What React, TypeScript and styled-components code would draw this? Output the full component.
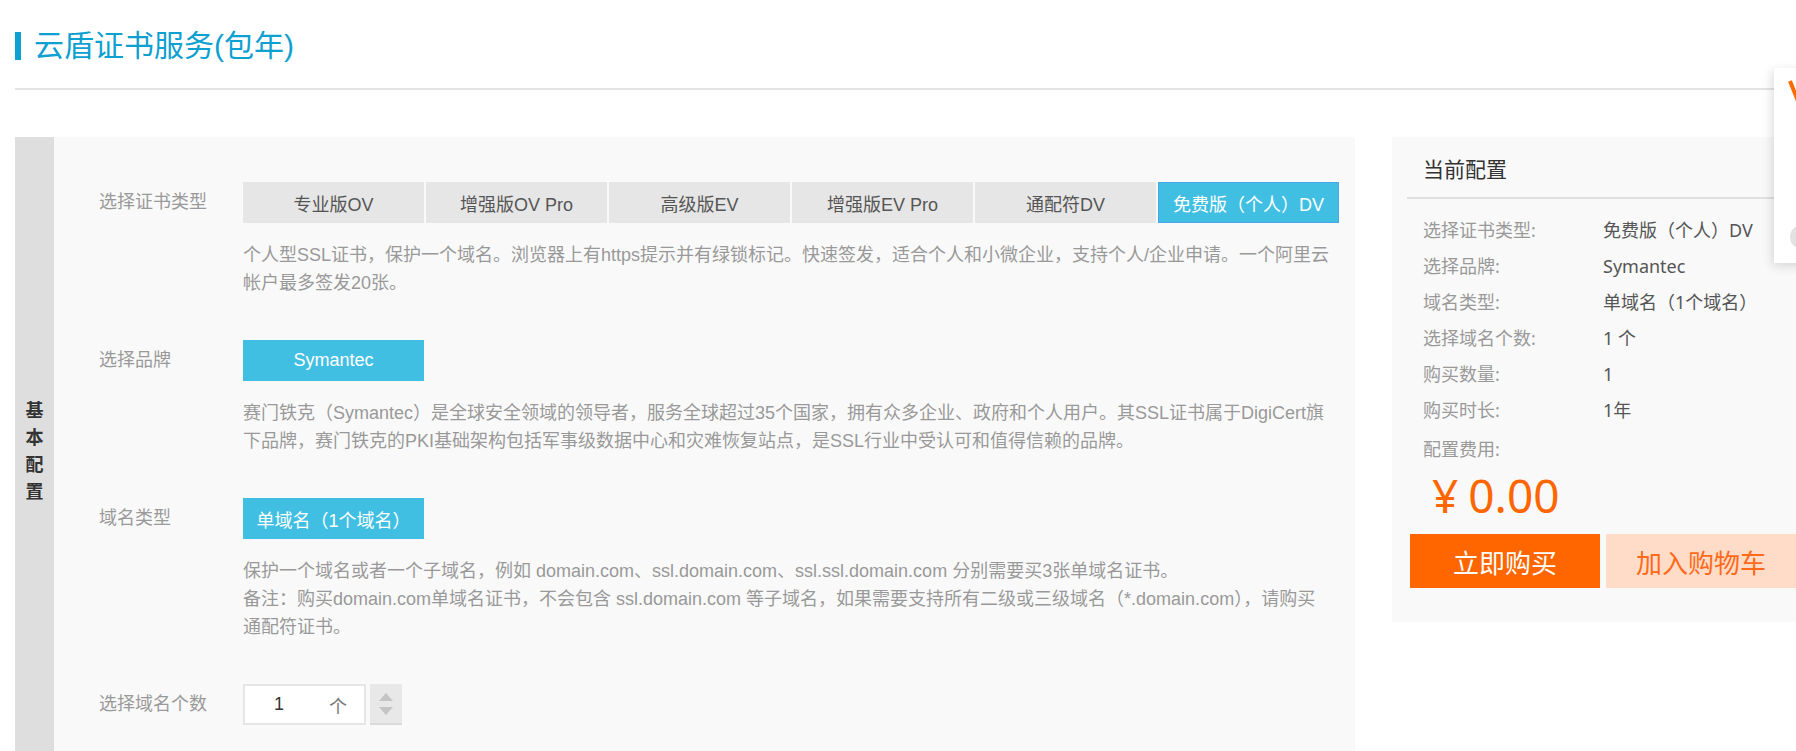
import React from "react";
import styled, { createGlobalStyle } from "styled-components";

const GlobalStyle = createGlobalStyle`
  html, body { margin: 0; padding: 0; background: #fff; overflow: hidden; }
  body { font-family: "Liberation Sans", "Noto Sans CJK SC", sans-serif; }
  * { box-sizing: border-box; }
`;

const Page = styled.div`
  width: 1830px;
  padding-left: 15px;
`;

const Header = styled.header`
  padding: 28px 0 24px;
  border-bottom: 2px solid #e3e3e3;
`;

const TitleRow = styled.div`
  display: flex;
  align-items: center;
  gap: 13px;
`;

const TitleBar = styled.span`
  width: 6px;
  height: 28px;
  background: #0ea0d0;
`;

const Title = styled.h1`
  margin: 0;
  font-size: 30px;
  line-height: 36px;
  font-weight: normal;
  color: #0ea0d0;
`;

const Content = styled.div`
  display: flex;
  align-items: flex-start;
  margin-top: 47px;
`;

const ConfigPanel = styled.section`
  width: 1340px;
  min-height: 626px;
  background: #f9f9f9;
  display: flex;
  flex-shrink: 0;
`;

const Strip = styled.div`
  width: 39px;
  background: #dedede;
  display: flex;
  align-items: center;
  justify-content: center;
`;

const StripText = styled.span`
  width: 18px;
  font-size: 18px;
  line-height: 27px;
  font-weight: bold;
  color: #333;
  text-align: center;
  word-break: break-all;
  font-family: "Noto Sans CJK SC", sans-serif;
`;

const Form = styled.div`
  flex: 1;
  padding: 45px 0 0 45px;
  display: flex;
  flex-direction: column;
  gap: 43px;
`;

const Row = styled.div`
  display: grid;
  grid-template-columns: 144px 1fr;
`;

const Label = styled.div`
  font-size: 18px;
  line-height: 41px;
  color: #999;
`;

const Options = styled.div`
  display: flex;
  gap: 2px;
`;

const Option = styled.div<{ $active?: boolean }>`
  width: 181px;
  height: 41px;
  display: flex;
  align-items: center;
  justify-content: center;
  font-size: 18px;
  border: 1px solid ${(p) => (p.$active ? "#4aa6e8" : "#e6e6e6")};
  background: ${(p) => (p.$active ? "#41bfe3" : "#e6e6e6")};
  color: ${(p) => (p.$active ? "#fff" : "#555")};
`;

const Single = styled(Option)`
  border-color: #41bfe3;
`;

const Desc = styled.div`
  margin-top: 18px;
  font-size: 18px;
  line-height: 28px;
  color: #999;
`;

const DescLine = styled.div`
  white-space: nowrap;
`;

const Counter = styled.div`
  display: flex;
  gap: 4px;
`;

const CountBox = styled.div`
  width: 123px;
  height: 41px;
  border: 2px solid #e6e6e6;
  background: #fff;
  display: flex;
  align-items: center;
  font-size: 18px;
  color: #333;
`;

const CountValue = styled.span`
  width: 84px;
  padding-left: 29px;
`;

const CountUnit = styled.span`
  color: #777;
`;

const Spinner = styled.div`
  width: 32px;
  height: 41px;
  background: #e8e8e8;
  border-bottom: 2px solid #dadada;
  display: flex;
  flex-direction: column;
  align-items: center;
  justify-content: center;
  gap: 6px;
`;

const Arrow = styled.span<{ $down?: boolean }>`
  width: 0;
  height: 0;
  border-left: 7px solid transparent;
  border-right: 7px solid transparent;
  ${(p) =>
    p.$down
      ? "border-top: 8px solid #c4c4c4;"
      : "border-bottom: 8px solid #c4c4c4;"}
`;

const Summary = styled.aside`
  width: 422px;
  margin-left: 37px;
  background: #f9f9f9;
  padding-bottom: 34px;
  flex-shrink: 0;
  font-family: "Noto Sans", "Noto Sans CJK SC", sans-serif;
`;

const SummaryHead = styled.div`
  margin: 0 15px;
  padding: 18px 16px 14px;
  font-size: 21px;
  line-height: 28px;
  color: #333;
  border-bottom: 2px solid #e0e0e0;
`;

const SumList = styled.div`
  margin-top: 13px;
  padding-left: 31px;
`;

const SumRow = styled.div`
  display: grid;
  grid-template-columns: 180px 1fr;
  height: 36px;
  line-height: 36px;
  font-size: 18px;
`;

const SumLabel = styled.span`
  color: #999;
`;

const SumValue = styled.span`
  color: #555;
`;

const FeeLabel = styled.div`
  margin-top: 3px;
  padding-left: 31px;
  font-size: 18px;
  line-height: 36px;
  color: #999;
`;

const Price = styled.div`
  padding-left: 40px;
  font-size: 46px;
  line-height: 56px;
  color: #ff6600;
`;

const Yen = styled.span`
  margin-right: 10px;
`;

const Actions = styled.div`
  display: flex;
  gap: 6px;
  padding: 0 18px;
  margin-top: 11px;
`;

const ActionButton = styled.button<{ $primary?: boolean }>`
  width: 190px;
  height: 54px;
  border: none;
  padding: 0;
  font-size: 26px;
  font-family: "Noto Sans CJK SC", sans-serif;
  background: ${(p) => (p.$primary ? "#ff6600" : "#ffdcc8")};
  color: ${(p) => (p.$primary ? "#fff" : "#ff6a1a")};
`;

const Popup = styled.div`
  position: fixed;
  left: 1774px;
  top: 68px;
  width: 260px;
  height: 195px;
  background: #fff;
  box-shadow: -2px 3px 10px rgba(0, 0, 0, 0.14);
  padding: 11px 0 0 14px;
`;

const PopupDot = styled.div`
  position: absolute;
  left: 16px;
  top: 157px;
  width: 24px;
  height: 24px;
  border-radius: 50%;
  background: #e2e2e2;
`;

const types = [
  "专业版OV",
  "增强版OV Pro",
  "高级版EV",
  "增强版EV Pro",
  "通配符DV",
  "免费版（个人）DV",
];

const summary: [string, string][] = [
  ["选择证书类型:", "免费版（个人）DV"],
  ["选择品牌:", "Symantec"],
  ["域名类型:", "单域名（1个域名）"],
  ["选择域名个数:", "1 个"],
  ["购买数量:", "1"],
  ["购买时长:", "1年"],
];

export default function App() {
  return (
    <>
      <GlobalStyle />
      <Page>
        <Header>
          <TitleRow>
            <TitleBar />
            <Title>云盾证书服务(包年)</Title>
          </TitleRow>
        </Header>
        <Content>
          <ConfigPanel>
            <Strip>
              <StripText>基本配置</StripText>
            </Strip>
            <Form>
              <Row>
                <Label>选择证书类型</Label>
                <div>
                  <Options>
                    {types.map((t, i) => (
                      <Option key={t} $active={i === types.length - 1}>
                        {t}
                      </Option>
                    ))}
                  </Options>
                  <Desc>
                    <DescLine>
                      个人型SSL证书，保护一个域名。浏览器上有https提示并有绿锁标记。快速签发，适合个人和小微企业，支持个人/企业申请。一个阿里云
                    </DescLine>
                    <DescLine>帐户最多签发20张。</DescLine>
                  </Desc>
                </div>
              </Row>
              <Row>
                <Label>选择品牌</Label>
                <div>
                  <Options>
                    <Single $active>Symantec</Single>
                  </Options>
                  <Desc>
                    <DescLine>
                      赛门铁克（Symantec）是全球安全领域的领导者，服务全球超过35个国家，拥有众多企业、政府和个人用户。其SSL证书属于DigiCert旗
                    </DescLine>
                    <DescLine>
                      下品牌，赛门铁克的PKI基础架构包括军事级数据中心和灾难恢复站点，是SSL行业中受认可和值得信赖的品牌。
                    </DescLine>
                  </Desc>
                </div>
              </Row>
              <Row>
                <Label>域名类型</Label>
                <div>
                  <Options>
                    <Single $active>单域名（1个域名）</Single>
                  </Options>
                  <Desc>
                    <DescLine>
                      保护一个域名或者一个子域名，例如 domain.com、ssl.domain.com、ssl.ssl.domain.com 分别需要买3张单域名证书。
                    </DescLine>
                    <DescLine>
                      备注：购买domain.com单域名证书，不会包含 ssl.domain.com 等子域名，如果需要支持所有二级或三级域名（*.domain.com），请购买
                    </DescLine>
                    <DescLine>通配符证书。</DescLine>
                  </Desc>
                </div>
              </Row>
              <Row>
                <Label>选择域名个数</Label>
                <Counter>
                  <CountBox>
                    <CountValue>1</CountValue>
                    <CountUnit>个</CountUnit>
                  </CountBox>
                  <Spinner>
                    <Arrow />
                    <Arrow $down />
                  </Spinner>
                </Counter>
              </Row>
            </Form>
          </ConfigPanel>
          <Summary>
            <SummaryHead>当前配置</SummaryHead>
            <SumList>
              {summary.map(([k, v]) => (
                <SumRow key={k}>
                  <SumLabel>{k}</SumLabel>
                  <SumValue>{v}</SumValue>
                </SumRow>
              ))}
            </SumList>
            <FeeLabel>配置费用:</FeeLabel>
            <Price>
              <Yen>¥</Yen>0.00
            </Price>
            <Actions>
              <ActionButton $primary>立即购买</ActionButton>
              <ActionButton>加入购物车</ActionButton>
            </Actions>
          </Summary>
        </Content>
      </Page>
      <Popup>
        <svg width="40" height="24" viewBox="0 0 40 24">
          <path
            d="M2 2 L10 22 L18 2"
            fill="none"
            stroke="#ff6a00"
            strokeWidth="4"
            strokeLinejoin="round"
          />
        </svg>
        <PopupDot />
      </Popup>
    </>
  );
}
